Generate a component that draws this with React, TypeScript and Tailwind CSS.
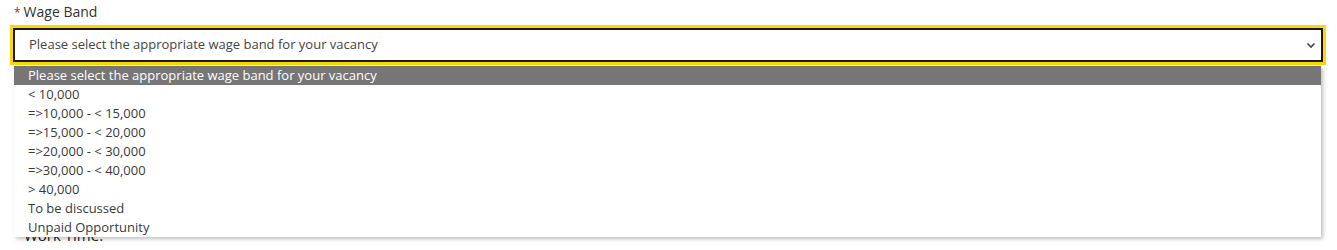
const options = [
  "Please select the appropriate wage band for your vacancy",
  "< 10,000",
  "=>10,000 - < 15,000",
  "=>15,000 - < 20,000",
  "=>20,000 - < 30,000",
  "=>30,000 - < 40,000",
  "> 40,000",
  "To be discussed",
  "Unpaid Opportunity",
];

export default function App() {
  return (
    <div
      className="h-[250px] w-full overflow-hidden bg-white px-[10px] pt-[2px] text-[#333]"
      style={{ fontFamily: '"Open Sans", "Noto Sans", sans-serif' }}
    >
      <label className="block pl-[4px] text-[14px] leading-[19px]">
        <span className="mr-[3px] text-[12px] text-[#b3261e]">*</span>Wage Band
      </label>

      <div className="relative mt-[3px] w-[1316px]">
        <div className="flex h-[40px] items-center justify-between border-[3px] border-[#ffd700] bg-white">
          <div className="flex h-full w-full items-center justify-between border-2 border-[#1a1a1a] pl-[14px] pr-[5px]">
            <span className="text-[13px] text-[#444]">
              Please select the appropriate wage band for your vacancy
            </span>
            <svg width="10" height="10" viewBox="0 0 10 10" className="text-[#444]">
              <path d="M1.5 3.5 L5 7 L8.5 3.5" fill="none" stroke="currentColor" strokeWidth="1.6" />
            </svg>
          </div>
        </div>

        <ul className="absolute left-[4px] top-[41px] z-10 w-[1307px] bg-white shadow-[2px_2px_4px_rgba(0,0,0,0.25)]">
          {options.map((o, i) => (
            <li
              key={o}
              className={
                "h-[19px] pl-[14px] text-[13px] leading-[19px] " +
                (i === 0 ? "bg-[#767676] text-white" : "text-[#3a3a3a]")
              }
            >
              {o}
            </li>
          ))}
        </ul>
      </div>

      <label className="mt-[161px] block pl-[14px] text-[15px] leading-[19px] text-[#222]">Work Time:</label>
    </div>
  );
}
